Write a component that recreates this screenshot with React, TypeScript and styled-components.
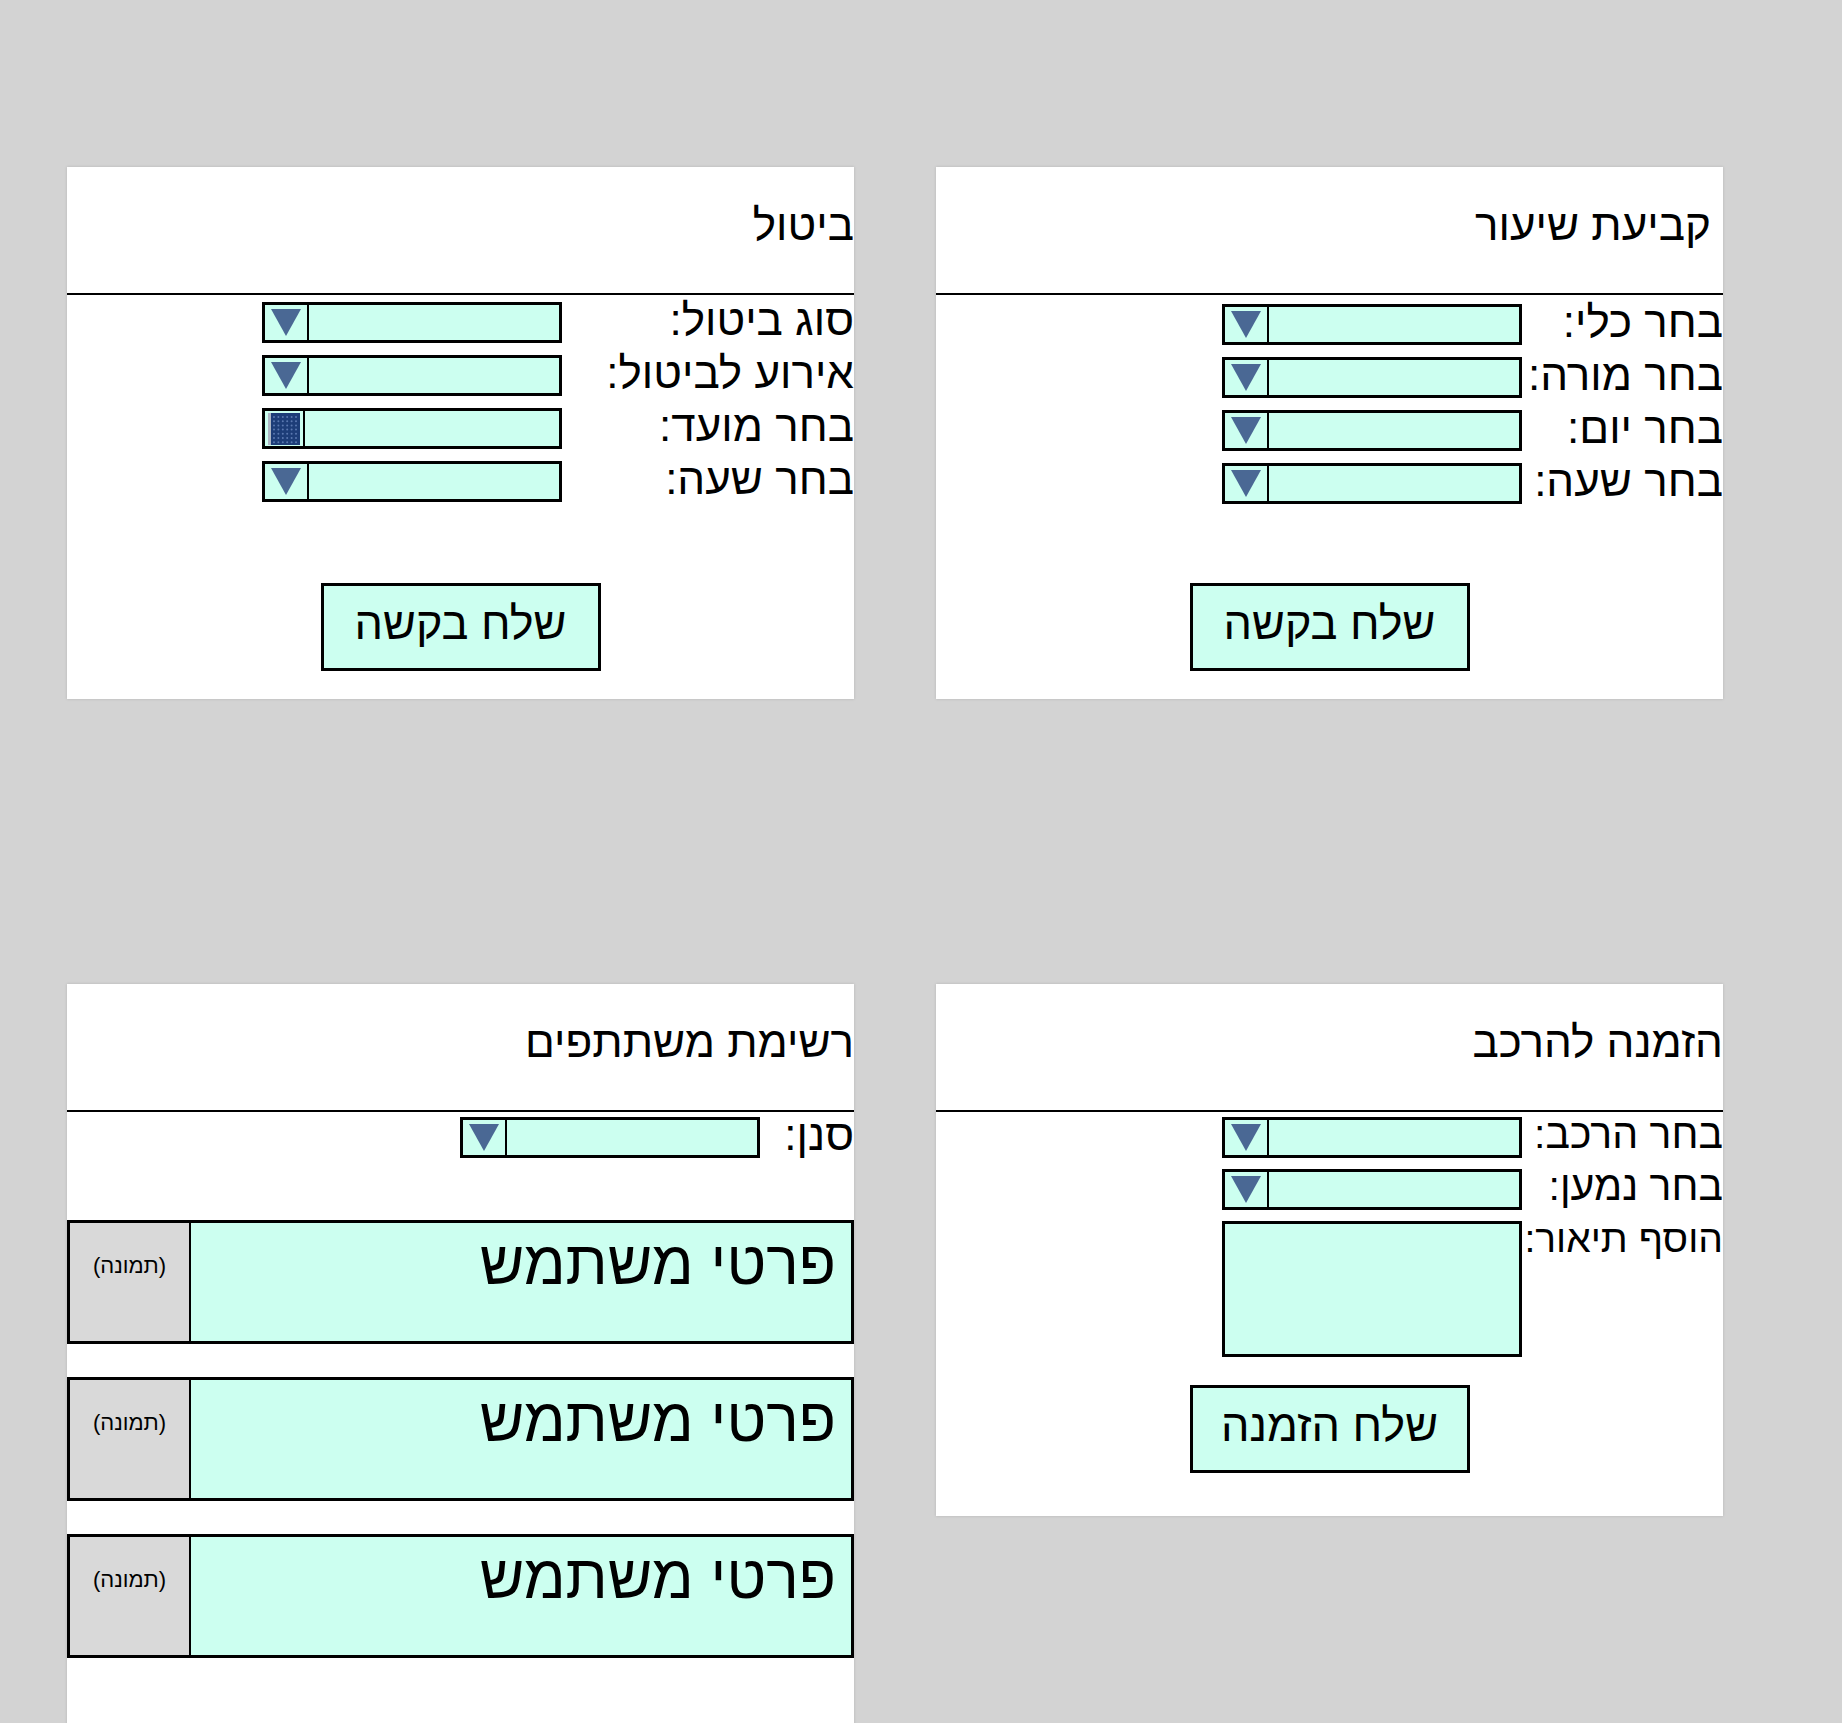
import styled, { createGlobalStyle } from "styled-components";

const mint = "#ccfff0";
const arrowBlue = "#4a6894";

const GlobalStyle = createGlobalStyle`
  body {
    margin: 0;
    background: #d3d3d3;
    font-family: "Liberation Sans", Arial, "DejaVu Sans", sans-serif;
    color: #000;
  }
`;

const Board = styled.main`
  direction: rtl;
  display: grid;
  grid-template-columns: 787px 787px;
  column-gap: 82px;
  row-gap: 285px;
  align-items: start;
  padding: 167px 119px 0 67px;
`;

const Panel = styled.section<{ $grow?: boolean }>`
  background: #fff;
  box-shadow: 0 0 3px rgba(0, 0, 0, 0.14);
  box-sizing: border-box;
  height: ${p => (p.$grow ? "auto" : "532px")};
  padding-bottom: ${p => (p.$grow ? 80 : 0)}px;
`;

const Header = styled.header<{ $inset?: number }>`
  height: 128px;
  box-sizing: border-box;
  padding: 33px ${p => p.$inset ?? 0}px 0 0;
  border-bottom: 2px solid #000;
  font-size: 44px;
`;

const Form = styled.div<{ $top: number; $gap?: number }>`
  display: grid;
  gap: ${p => p.$gap ?? 12}px;
  padding-top: ${p => p.$top}px;
`;

const Row = styled.div<{ $labelWidth: number }>`
  display: grid;
  grid-template-columns: ${p => p.$labelWidth}px 300px;
  align-items: center;
`;

const Label = styled.label<{ $top?: boolean; $size?: number }>`
  font-size: ${p => p.$size ?? 44}px;
  line-height: 35px;
  padding-bottom: 6px;
  white-space: nowrap;
  align-self: ${p => (p.$top ? "start" : "center")};
`;

const SelectBox = styled.div`
  display: flex;
  width: 300px;
  height: 41px;
  box-sizing: border-box;
  border: 3px solid #000;
  background: ${mint};
`;

const SelectValue = styled.div`
  flex: 1;
`;

const SelectToggle = styled.div<{ $narrow?: boolean }>`
  width: ${p => (p.$narrow ? 38 : 42)}px;
  display: flex;
  align-items: center;
  justify-content: center;
  border-right: 2px solid #000;
`;

const TextBox = styled.div`
  width: 300px;
  height: 136px;
  box-sizing: border-box;
  border: 3px solid #000;
  background: ${mint};
`;

const Actions = styled.div<{ $top: number }>`
  display: flex;
  justify-content: center;
  padding-top: ${p => p.$top}px;
`;

const SubmitButton = styled.button`
  width: 280px;
  height: 88px;
  box-sizing: border-box;
  border: 3px solid #000;
  background: ${mint};
  font-family: inherit;
  font-size: 45px;
  color: #000;
  padding: 0 0 6px;
`;

const UserList = styled.div`
  display: grid;
  gap: 33px;
  padding-top: 62px;
`;

const UserCard = styled.div`
  display: flex;
  height: 124px;
  box-sizing: border-box;
  border: 3px solid #000;
  background: ${mint};
`;

const UserDetails = styled.div`
  flex: 1;
  font-size: 61px;
  padding: 5px 15px 0 0;
`;

const Photo = styled.div`
  width: 121px;
  border-right: 2px solid #000;
  background: #d9d9d9;
  font-size: 22px;
  text-align: center;
  padding-top: 30px;
  box-sizing: border-box;
`;

const Arrow = () => (
  <svg width="30" height="27" viewBox="0 0 30 27">
    <polygon points="0,0 30,0 15,27" fill={arrowBlue} />
  </svg>
);

const CalendarIcon = () => (
  <svg width="32" height="32" viewBox="0 0 32 32">
    <rect x="0" y="0" width="32" height="32" fill="#1d3d78" />
    <rect x="0" y="0" width="3" height="32" fill="#aeb6c4" />
    {Array.from({ length: 7 }).map((_, r) =>
      Array.from({ length: 6 }).map((_, c) => (
        <circle key={`${r}-${c}`} cx={6 + c * 4.4} cy={4 + r * 4.2} r="1" fill="#5a78b0" />
      ))
    )}
  </svg>
);

const Select = ({ date }: { date?: boolean }) => (
  <SelectBox>
    <SelectValue />
    <SelectToggle $narrow={date}>{date ? <CalendarIcon /> : <Arrow />}</SelectToggle>
  </SelectBox>
);

const lessonFields = ["בחר כלי:", "בחר מורה:", "בחר יום:", "בחר שעה:"];

const users = [1, 2, 3];

export default function App() {
  return (
    <>
      <GlobalStyle />
      <Board>
        <Panel>
          <Header $inset={12}>קביעת שיעור</Header>
          <Form $top={9}>
            {lessonFields.map(label => (
              <Row key={label} $labelWidth={201}>
                <Label>{label}</Label>
                <Select />
              </Row>
            ))}
          </Form>
          <Actions $top={79}>
            <SubmitButton>שלח בקשה</SubmitButton>
          </Actions>
        </Panel>

        <Panel>
          <Header>ביטול</Header>
          <Form $top={7}>
            <Row $labelWidth={292}>
              <Label>סוג ביטול:</Label>
              <Select />
            </Row>
            <Row $labelWidth={292}>
              <Label>אירוע לביטול:</Label>
              <Select />
            </Row>
            <Row $labelWidth={292}>
              <Label>בחר מועד:</Label>
              <Select date />
            </Row>
            <Row $labelWidth={292}>
              <Label>בחר שעה:</Label>
              <Select />
            </Row>
          </Form>
          <Actions $top={81}>
            <SubmitButton>שלח בקשה</SubmitButton>
          </Actions>
        </Panel>

        <Panel>
          <Header>הזמנה להרכב</Header>
          <Form $top={5} $gap={11}>
            <Row $labelWidth={201}>
              <Label $size={41}>בחר הרכב:</Label>
              <Select />
            </Row>
            <Row $labelWidth={201}>
              <Label $size={41}>בחר נמען:</Label>
              <Select />
            </Row>
            <Row $labelWidth={201}>
              <Label $top $size={39}>הוסף תיאור:</Label>
              <TextBox />
            </Row>
          </Form>
          <Actions $top={28}>
            <SubmitButton>שלח הזמנה</SubmitButton>
          </Actions>
        </Panel>

        <Panel $grow>
          <Header>רשימת משתתפים</Header>
          <Form $top={5}>
            <Row $labelWidth={94}>
              <Label>סנן:</Label>
              <Select />
            </Row>
          </Form>
          <UserList>
            {users.map(id => (
              <UserCard key={id}>
                <UserDetails>פרטי משתמש</UserDetails>
                <Photo>(תמונה)</Photo>
              </UserCard>
            ))}
          </UserList>
        </Panel>
      </Board>
    </>
  );
}
